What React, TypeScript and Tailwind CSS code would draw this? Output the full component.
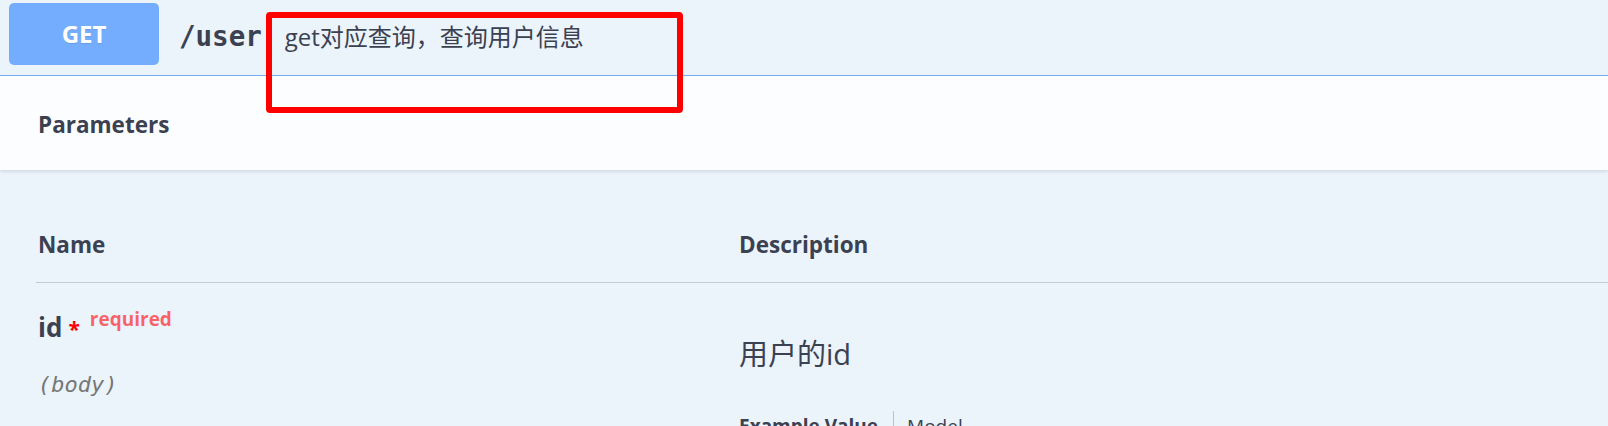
export default function App() {
  return (
    <div className="relative w-full h-[426px] overflow-hidden bg-[#ebf3fb] text-[#3b4151] font-['Open_Sans','Noto_Sans_CJK_SC',sans-serif]">
      {/* Summary bar */}
      <div className="h-[76px] flex items-start border-b border-[#77aef0]">
        <div className="mt-[3px] ml-[9px] w-[150px] h-[62px] rounded-[5px] bg-[#74adfe] flex items-center justify-center text-white font-bold text-[24px] [text-shadow:0_1px_0_rgba(0,0,0,0.1)]">
          GET
        </div>
        <div className="mt-[20px] ml-[20px] flex items-baseline">
          <span className="font-['DejaVu_Sans_Mono',monospace] font-bold text-[27.5px] leading-[32px]">/user</span>
          <span className="ml-[23px] text-[24px] leading-[32px]">get对应查询，查询用户信息</span>
        </div>
      </div>

      {/* annotation box */}
      <div className="absolute z-20 left-[266px] top-[12px] w-[417px] h-[101px] border-[6px] border-[#ff0000] rounded-[4px]" />

      {/* Section header */}
      <div className="relative z-10 h-[94px] pt-[4px] bg-[#fcfdfe] shadow-[0_2px_3px_rgba(0,0,0,0.1)] flex items-center pl-[38px]">
        <h4 className="text-[22.5px] font-bold leading-[30px]">Parameters</h4>
      </div>

      {/* Table */}
      <div className="pt-[61px] pl-[36px]">
        <div className="grid grid-cols-[703px_1fr] pb-[23px] border-b border-[#c5cbd6] text-[22.5px] font-bold leading-[28px]">
          <div className="pl-[2px]">Name</div>
          <div>Description</div>
        </div>

        <div className="grid grid-cols-[703px_1fr]">
          <div className="pl-[2px] pt-[26px]">
            <div className="flex items-baseline leading-[36px]">
              <span className="text-[26px] font-bold">id</span>
              <span className="text-[21px] font-bold text-[#ff0000] ml-[6px]">*</span>
              <span className="relative -top-[11px] ml-[10px] text-[19px] font-bold text-[rgba(255,0,0,0.6)]">required</span>
            </div>
            <div className="mt-[24px] font-['DejaVu_Sans_Mono',monospace] italic text-[22px] leading-[26px] text-[#777]">
              (body)
            </div>
          </div>

          <div className="pt-[51px]">
            <p className="text-[29px] leading-[40px]">用户的id</p>
            <div className="mt-[37px] flex items-start">
              <span className="pt-[3px] text-[19px] font-bold leading-[24px]">Example Value</span>
              <div className="ml-[15px] pl-[13px] pt-[3px] h-[40px] border-l border-[#bcc2c9] text-[19px] leading-[24px]">
                Model
              </div>
            </div>
          </div>
        </div>
      </div>
    </div>
  );
}
